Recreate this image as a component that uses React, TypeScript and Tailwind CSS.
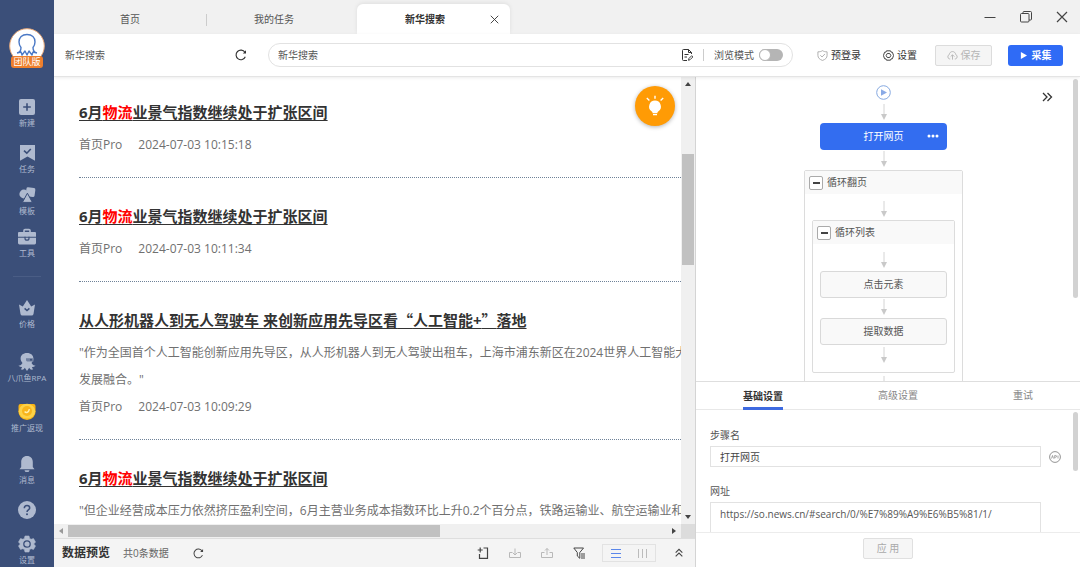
import React from "react";

type IconProps = { className?: string };

/* ---------- Sidebar icons ---------- */

const NewIcon = () => (
  <svg viewBox="0 0 18 18" className="size-[18px]">
    <rect x="1" y="1" width="16" height="16" rx="2" fill="currentColor" />
    <path d="M9 5.2v7.6M5.2 9h7.6" stroke="#3b4f79" strokeWidth="1.6" fill="none" />
  </svg>
);

const TaskIcon = () => (
  <svg viewBox="0 0 18 18" className="size-[18px]">
    <path d="M2 1h15v15.8L9.5 12.6 2 16.8z" fill="currentColor" />
    <path d="M6 6.6l2.8 2.6 4-4.2" stroke="#3b4f79" strokeWidth="1.6" fill="none" />
  </svg>
);

const TemplateIcon = () => (
  <svg viewBox="0 0 18 18" className="size-[18px]">
    <circle cx="5.8" cy="8" r="4.4" fill="currentColor" />
    <rect x="8" y="1.6" width="9" height="9" rx="1.6" transform="rotate(8 12 6)" fill="currentColor" />
    <path d="M9.4 7.2l5 9.2H4.4z" fill="currentColor" stroke="#3b4f79" strokeWidth="1" strokeLinejoin="round" />
  </svg>
);

const ToolIcon = () => (
  <svg viewBox="0 0 18 18" className="size-[18px]">
    <path d="M6 4.4V2.6a1 1 0 0 1 1-1h4a1 1 0 0 1 1 1v1.8" stroke="currentColor" strokeWidth="1.6" fill="none" />
    <path d="M1 4h16a1 1 0 0 1 1 1v3.8H0V5a1 1 0 0 1 1-1z" fill="currentColor" />
    <path d="M0 9.8h18V15a1.4 1.4 0 0 1-1.400 1.400H1.400A1.400 1.400 0 0 1 0 15z" fill="currentColor" />
    <path d="M7 8.800v1.400a2 2 0 0 0 4 0V8.800" stroke="#3b4f79" strokeWidth="1.200" fill="none" />
  </svg>
);

const PriceIcon = () => (
  <svg viewBox="0 0 18 18" className="size-[18px]">
    <path d="M1 5.500l3.800 2L9 1l4.200 6.500 3.800-2-1.500 9.500a2 2 0 0 1-2 1.600h-9a2 2 0 0 1-2-1.600z" fill="currentColor" />
    <path d="M6.600 9.400L9 11.600l2.400-2.200" stroke="#3b4f79" strokeWidth="1.500" fill="none" />
  </svg>
);

const RpaIcon = () => (
  <svg viewBox="0 0 18 18" className="size-[18px]">
    <path
      d="M9 0c4 0 6.400 2.400 6.400 5.600 0 2-.9 3.300-1.900 4.300.9 1.600 2 2.500 4 2.700-.8 1.200-2.400 1.600-3.600 1.100.2 1.200.6 2 1.300 2.600-1.600.8-3.200.2-4-1.500L9 17.900l-2.200-3.100c-.8 1.700-2.400 2.300-4 1.500.7-.6 1.100-1.400 1.300-2.600-1.200.5-2.800.1-3.600-1.100 2-.2 3.100-1.100 4-2.700-1-1-1.900-2.300-1.900-4.300C2.600 2.400 5 0 9 0z"
      fill="currentColor"
    />
    <path d="M8 5.200h7.600v3.200H10A1.600 1.600 0 0 1 8 6.800z" fill="#6f7f9f" />
    <circle cx="13" cy="6.800" r="1" fill="#3b4f79" />
  </svg>
);

const CoinIcon = () => (
  <svg viewBox="0 0 18 18" className="size-[18px]">
    <path d="M2.500 1h13a2 2 0 0 1 2 2v4A8.500 8.500 0 0 1 9 16.900 8.500 8.500 0 0 1 .5 7V3a2 2 0 0 1 2-2z" fill="#f9b414" />
    <ellipse cx="9" cy="8.200" rx="8.200" ry="7.400" fill="#fdd247" />
    <circle cx="9" cy="8" r="5" fill="#f8b51c" />
    <path d="M6.600 8.600c1.600 1.800 4 1 4.800-2.400" stroke="#fff0b0" strokeWidth="1.500" fill="none" />
  </svg>
);

const BellIcon = () => (
  <svg viewBox="0 0 18 18" className="size-[18px]">
    <path d="M9 1c3.600 0 5.800 2.600 5.800 6v5l1.700 2.200H1.500L3.200 12V7C3.200 3.600 5.400 1 9 1z" fill="currentColor" />
    <path d="M6.500 15.200h5a2.500 1.900 0 0 1-5 0z" fill="currentColor" />
  </svg>
);

const HelpIcon = () => (
  <svg viewBox="0 0 18 18" className="size-[18px]">
    <circle cx="9" cy="9" r="9" fill="currentColor" />
    <path d="M6.300 7.300C6.300 5.500 7.500 4.500 9 4.500s2.700 1 2.700 2.500c0 1.900-2.700 2-2.700 4" stroke="#3b4f79" strokeWidth="1.500" fill="none" />
    <circle cx="9" cy="13.200" r="1" fill="#3b4f79" />
  </svg>
);

const SettingIcon = () => (
  <svg viewBox="0 0 18 18" className="size-[18px]">
    <path
      d="M7 1h4l.6 2.400 1.500.9 2.400-.7 2 3.400L15.700 9l1.800 2-2 3.400-2.400-.7-1.500.9L11 17H7l-.6-2.400-1.500-.9-2.400.7-2-3.400L2.300 9 .5 7l2-3.400 2.400.7 1.500-.9z"
      fill="currentColor"
      stroke="currentColor"
      strokeLinejoin="round"
      strokeWidth=".6"
    />
    <circle cx="9" cy="9" r="3.200" fill="none" stroke="#3b4f79" strokeWidth="1.300" />
  </svg>
);

/* ---------- General icons ---------- */

const RefreshIcon = ({ className }: IconProps) => (
  <svg viewBox="0 0 12 12" className={className} fill="none" stroke="currentColor" strokeWidth="1.100">
    <path d="M10.300 7.800A4.800 4.800 0 1 1 9.900 3.300" />
    <path d="M11 1.200v3.200H7.800z" fill="currentColor" stroke="none" />
  </svg>
);

const CloseIcon = ({ className }: IconProps) => (
  <svg viewBox="0 0 12 12" className={className} fill="none" stroke="currentColor" strokeWidth="1.200">
    <path d="M1 1l10 10M11 1L1 11" />
  </svg>
);

const ChevronsRight = ({ className }: IconProps) => (
  <svg viewBox="0 0 12 12" className={className} fill="none" stroke="currentColor" strokeWidth="1.300">
    <path d="M2 2l4 4-4 4M6.500 2l4 4-4 4" />
  </svg>
);

const Arrow = () => (
  <svg viewBox="0 0 8 16" className="h-4 w-2">
    <path d="M4 0v11" stroke="#d4d4d4" />
    <path d="M1 10h6l-3 6z" fill="#c9c9c9" />
  </svg>
);

/* ---------- Sidebar ---------- */

const navItems = [
  { label: "新建", icon: <NewIcon />, space: "mt-[30px]" },
  { label: "任务", icon: <TaskIcon />, space: "mt-3.5" },
  { label: "模板", icon: <TemplateIcon />, space: "mt-2.5" },
  { label: "工具", icon: <ToolIcon />, space: "mt-2.5" },
];

const moreItems = [
  { label: "价格", icon: <PriceIcon />, space: "mt-[22px]" },
  { label: "八爪鱼RPA", icon: <RpaIcon />, space: "mt-[22px]" },
  { label: "推广返现", icon: <CoinIcon />, space: "mt-[18px]" },
  { label: "消息", icon: <BellIcon />, space: "mt-5" },
  { label: "", icon: <HelpIcon />, space: "mt-3.5" },
  { label: "设置", icon: <SettingIcon />, space: "mt-4" },
];

function NavItem({ label, icon, space }: { label: string; icon: React.ReactNode; space: string }) {
  return (
    <button aria-label={label || "帮助"} className={`flex shrink-0 flex-col items-center text-[#afbacf] ${space}`}>
      {icon}
      {label && <span className="text-[8px] leading-[14px] whitespace-nowrap">{label}</span>}
    </button>
  );
}

function Sidebar() {
  return (
    <nav className="flex w-[54px] shrink-0 flex-col items-center overflow-hidden bg-[#3b4f79] pt-7">
      <div className="flex shrink-0 flex-col items-center">
        <svg viewBox="0 0 36 36" className="size-9">
          <circle cx="18" cy="18" r="17.300" fill="#fff" stroke="#e9a877" strokeWidth="1" />
          <path
            d="M8 25c2.500-.5 4-3 4-5.500-1.500-2-2-4-2-5.500 0-4.500 3-7.500 8-7.500s8 3 8 7.500c0 1.500-.5 3.500-2 5.500 0 2.500 1.500 5 4 5.500M8 25l4-1 1 3 3-4 2 4 2-4 3 4 1-3 4 1"
            fill="none"
            stroke="#4b79c6"
            strokeWidth="1.400"
            strokeLinejoin="round"
          />
        </svg>
        <span className="z-10 -mt-2 rounded-[3px] bg-[#ee7f2d] px-0.5 text-[9px] leading-3 whitespace-nowrap text-white">
          团队版
        </span>
      </div>
      {navItems.map((item) => (
        <NavItem key={item.label} {...item} />
      ))}
      <hr className="mt-4 w-7 shrink-0 border-[#4a5d85]" />
      {moreItems.map((item) => (
        <NavItem key={item.label} {...item} />
      ))}
    </nav>
  );
}

/* ---------- Header ---------- */

function TabBar() {
  return (
    <header className="flex h-[34px] shrink-0 items-end bg-[#f1f1f1] text-[10px] text-[#555]">
      <button className="h-[29px] w-[152px] border-none">首页</button>
      <span className="mb-2 h-3 w-px bg-[#ccc]" />
      <button className="mr-4 h-[29px] w-[134px]">我的任务</button>
      <div className="flex h-[30px] w-[153px] items-center justify-between rounded-t-md bg-white pr-[11px] pl-12 shadow-[0_-1px_4px_rgba(0,0,0,0.08)]">
        <span className="font-bold text-[#333]">新华搜索</span>
        <button aria-label="关闭标签" className="text-[#333]">
          <CloseIcon className="size-[9px]" />
        </button>
      </div>
      <div className="mb-[11px] ml-auto flex items-center gap-6 pr-3 text-[#444]">
        <button aria-label="最小化">
          <svg viewBox="0 0 12 12" className="size-3" fill="none" stroke="currentColor">
            <path d="M.5 6.500h11" />
          </svg>
        </button>
        <button aria-label="还原">
          <svg viewBox="0 0 12 12" className="size-3" fill="none" stroke="currentColor">
            <rect x=".5" y="2.500" width="8.500" height="8.500" rx="1" />
            <path d="M3 2.500V1.500a1 1 0 0 1 1-1h6.500a1 1 0 0 1 1 1v6.500a1 1 0 0 1-1 1H9" />
          </svg>
        </button>
        <button aria-label="关闭">
          <CloseIcon className="size-3" />
        </button>
      </div>
    </header>
  );
}

function Toolbar() {
  return (
    <div className="z-10 flex h-[43px] shrink-0 items-center border-b border-[#e4e4e4] bg-white pr-[17px] pl-[11px] text-[10px] text-[#333] shadow-[0_1px_3px_rgba(0,0,0,0.08)]">
      <span className="w-[170px] text-[#555]">新华搜索</span>
      <button aria-label="刷新">
        <RefreshIcon className="size-3" />
      </button>
      <div className="mr-6 ml-[21px] flex h-6 flex-1 items-center rounded-full border border-[#e2e2e2] px-[9px]">
        <input aria-label="网址" defaultValue="新华搜索" className="min-w-0 flex-1 text-[#555] outline-none" />
        <button aria-label="编辑">
          <svg viewBox="0 0 12 12" className="size-3" fill="none" stroke="currentColor">
            <path d="M10.500 5V3.500L7.500.5h-5a1 1 0 0 0-1 1v9a1 1 0 0 0 1 1H6M7.500.5v3h3M3.500 5.500h4M3.500 8h2.500" />
            <path d="M7.500 11.300l.4-1.800 2.800-2.800 1.200 1.200-2.800 2.800z" strokeWidth=".9" />
          </svg>
        </button>
        <span className="mx-[10px] h-3 w-px bg-[#ccc]" />
        <label className="flex items-center gap-[5px] text-[#555]">
          浏览模式
          <input
            type="checkbox"
            role="switch"
            className="h-3 w-6 appearance-none rounded-full bg-[#b5b5b5] before:block before:size-3 before:rounded-full before:border before:border-[#b5b5b5] before:bg-white"
          />
        </label>
      </div>
      <button className="flex items-center gap-[3px]">
        <svg viewBox="0 0 12 12" className="size-[11px]" fill="none" stroke="#aaa">
          <path d="M6 .7c1.500 1 3 1.300 5 1.300v4c0 2.500-1.800 4.300-5 5.400C2.800 10.300 1 8.500 1 6V2c2 0 3.500-.3 5-1.300z" />
          <path d="M3.600 5.800l1.900 1.800 3.200-3.300" />
        </svg>
        预登录
      </button>
      <button className="ml-[22px] flex items-center gap-[3px]">
        <svg viewBox="0 0 12 12" className="size-[11px]" fill="none" stroke="#333">
          <path d="M3.800.9h4.400l.6 1.400 1.500.2L11.500 6l-1.200 3.500-1.500.2-.6 1.400H3.800l-.6-1.400-1.500-.2L.5 6l1.200-3.500 1.500-.2z" strokeLinejoin="round" />
          <path d="M4.700 3.800h2.600L8.600 6 7.300 8.200H4.700L3.400 6z" />
        </svg>
        设置
      </button>
      <button disabled className="ml-[18px] flex h-[21px] w-[57px] items-center justify-center gap-[3px] rounded-[2px] border border-[#dcdcdc] bg-[#f5f5f5] text-[#b5b5b5]">
        <svg viewBox="0 0 12 12" className="size-[11px]" fill="none" stroke="currentColor">
          <path d="M3.500 9.800H3A2.500 2.500 0 0 1 2.500 5C2.700 3 4.200 1.700 6 1.700S9.300 3 9.500 5a2.500 2.500 0 0 1-.5 4.800h-.5M6 10.500v-5M4 7.200l2-2 2 2" />
        </svg>
        保存
      </button>
      <button className="ml-4 flex h-[21px] w-[55px] items-center justify-center gap-[5px] rounded-[3px] bg-[#2f6bf6] font-bold text-white">
        <svg viewBox="0 0 8 8" className="size-[7px]">
          <path d="M1 0l7 4-7 4z" fill="currentColor" />
        </svg>
        采集
      </button>
    </div>
  );
}

/* ---------- Browser view ---------- */

type Article = { title: React.ReactNode; lines?: string[]; date?: string };

const logisticsTitle = (
  <>
    6月<em className="text-[#f00] not-italic">物流</em>业景气指数继续处于扩张区间
  </>
);

const cjk = "font-['Noto_Sans_CJK_SC',sans-serif]";

const articles: Article[] = [
  { title: logisticsTitle, date: "2024-07-03 10:15:18" },
  { title: logisticsTitle, date: "2024-07-03 10:11:34" },
  {
    title: (
      <>
        从人形机器人到无人驾驶车 来创新应用先导区看<span className={cjk}>“</span>人工智能+<span className={cjk}>”</span>落地
      </>
    ),
    lines: [
      "\"作为全国首个人工智能创新应用先导区，从人形机器人到无人驾驶出租车，上海市浦东新区在2024世界人工智能大会",
      "发展融合。\"",
    ],
    date: "2024-07-03 10:09:29",
  },
  {
    title: logisticsTitle,
    lines: [
      "\"但企业经营成本压力依然挤压盈利空间，6月主营业务成本指数环比上升0.2个百分点，铁路运输业、航空运输业和邮",
    ],
  },
];

function ArticleRow({ title, lines = [], date }: Article) {
  return (
    <article className="border-b border-dotted border-[#6f8298] pt-5 pb-[19px] text-xs leading-[27px] text-[#707070] first:pt-[17px]">
      <h2 className="mb-px text-[15px] leading-9 font-bold text-[#333]">
        <a href="#article" className="underline underline-offset-2">
          {title}
        </a>
      </h2>
      {lines.map((line) => (
        <p key={line}>{line}</p>
      ))}
      {date && (
        <p className="flex gap-4">
          <span>首页Pro</span>
          <time>{date}</time>
        </p>
      )}
    </article>
  );
}

function BrowserView() {
  return (
    <section className="flex min-h-0 flex-1 flex-col">
      <div className="flex min-h-0 flex-1">
        <div className="relative min-w-0 flex-1 overflow-hidden pl-[25px] whitespace-nowrap">
          {articles.map((article, i) => (
            <ArticleRow key={i} {...article} />
          ))}
          <button aria-label="提示" className="absolute top-[9px] right-[6px] flex size-10 items-center justify-center rounded-full bg-[#ff9b05] shadow-[0_1px_4px_rgba(0,0,0,0.3)]">
            <svg viewBox="0 0 20 22" className="h-[22px] w-5" fill="none" stroke="#fff" strokeWidth="1.400">
              <path d="M10 5.500a6 6 0 0 1 3.500 10.800c-.9.700-1.100 1.200-1.100 2H7.600c0-.8-.2-1.300-1.100-2A6 6 0 0 1 10 5.500z" fill="#fff" stroke="none" />
              <path d="M8 19.600h4M10 .8v2.900M1.800 3l2.600 2.400M18.200 3l-2.600 2.400" />
            </svg>
          </button>
        </div>
        <div className="flex w-[14px] shrink-0 flex-col items-center bg-[#f0f0f0] py-[5px]">
          <svg viewBox="0 0 6 4" className="h-1 w-1.5">
            <path d="M0 4l3-4 3 4z" fill="#444" />
          </svg>
          <span className="mt-[68px] h-[111px] w-3 bg-[#c1c1c1]" />
          <svg viewBox="0 0 6 4" className="mt-auto h-1 w-1.5">
            <path d="M0 0l3 4 3-4z" fill="#444" />
          </svg>
        </div>
      </div>
      <div className="flex h-[14px] shrink-0 items-center bg-[#f0f0f0]">
        <svg viewBox="0 0 4 6" className="mx-[5px] h-1.5 w-1">
          <path d="M4 0L0 3l4 3z" fill="#999" />
        </svg>
        <span className="h-3 w-[58%] bg-[#c1c1c1]" />
        <svg viewBox="0 0 4 6" className="mr-[5px] ml-auto h-1.5 w-1">
          <path d="M0 0l4 3-4 3z" fill="#444" />
        </svg>
        <span className="h-full w-[14px] bg-[#dcdcdc]" />
      </div>
    </section>
  );
}

function PreviewBar() {
  return (
    <footer className="flex h-[29px] shrink-0 items-center border-t border-[#dedede] bg-[#f4f4f4] pr-[11px] pl-2 text-[10px] text-[#444]">
      <strong className="text-xs text-[#333]">数据预览</strong>
      <span className="mr-6 ml-[13px] text-[#666]">共0条数据</span>
      <button aria-label="刷新数据">
        <RefreshIcon className="size-[11px]" />
      </button>
      <div className="mr-[17px] ml-auto flex items-center gap-5">
        <button aria-label="添加字段">
          <svg viewBox="0 0 12 12" className="size-3" fill="none" stroke="currentColor" strokeWidth="1.200">
            <path d="M2.500 7v4.300h8V1H6.500M3.200.5v5M.7 3h5" />
          </svg>
        </button>
        <button aria-label="导入" className="text-[#b8b8b8]">
          <svg viewBox="0 0 12 12" className="size-3" fill="none" stroke="currentColor">
            <path d="M3.500 5.500h-3v5h11v-5h-3M6 1.500v6.500M4 6l2 2 2-2" />
          </svg>
        </button>
        <button aria-label="导出" className="text-[#b8b8b8]">
          <svg viewBox="0 0 12 12" className="size-3" fill="none" stroke="currentColor">
            <path d="M3.500 5.500h-3v5h11v-5h-3M6 8V1.500M4 3.500l2-2 2 2" />
          </svg>
        </button>
        <button aria-label="筛选">
          <svg viewBox="0 0 12 12" className="size-3" fill="none" stroke="currentColor">
            <path d="M.8 1h9.700L6.800 5.500v5.800L4.300 9V5.500zM8 7h4M8 9h4M8 11h4" />
          </svg>
        </button>
      </div>
      <div className="flex h-[18px] w-[54px] items-center justify-around border border-[#e2e2e2]">
        <button aria-label="横向视图">
          <svg viewBox="0 0 10 10" className="size-2.5" stroke="#5b87ea">
            <path d="M0 1.500h10M0 5.500h10M0 9.500h10" />
          </svg>
        </button>
        <button aria-label="纵向视图">
          <svg viewBox="0 0 10 10" className="size-2.5" stroke="#bbbbbb">
            <path d="M1.500 1v9M5.500 1v9M9.500 1v9" />
          </svg>
        </button>
      </div>
      <button aria-label="展开" className="ml-[18px]">
        <ChevronsRight className="size-[10px] -rotate-90" />
      </button>
    </footer>
  );
}

/* ---------- Workflow ---------- */

function Connector({ className }: IconProps) {
  return (
    <div className={`flex shrink-0 flex-col items-center justify-end pb-[3px] ${className}`}>
      <Arrow />
    </div>
  );
}

function LoopHeader({ children }: { children: React.ReactNode }) {
  return (
    <div className="flex h-[23px] shrink-0 items-center gap-1 bg-[#f9f9f9] pl-1">
      <button aria-label="折叠" className="flex size-[14px] items-center justify-center rounded-[2px] border border-[#aaa] bg-white">
        <span className="h-[2px] w-[7px] bg-[#444]" />
      </button>
      {children}
    </div>
  );
}

function StepNode({ children }: { children: React.ReactNode }) {
  return (
    <button className="h-[27px] w-[127px] shrink-0 self-center rounded-[3px] border border-[#d9d9d9] bg-[#f9f9f9]">{children}</button>
  );
}

function Workflow() {
  return (
    <div className="flex min-h-0 flex-1 overflow-hidden text-[10px] text-[#555]">
      <div className="relative flex min-w-0 flex-1 flex-col items-center pt-2">
        <svg viewBox="0 0 15 15" className="size-[15px] shrink-0">
          <circle cx="7.500" cy="7.500" r="6.800" fill="#fff" stroke="#86a9e0" />
          <path d="M5 4.200l6 3.300-6 3.300z" fill="#8aaae6" />
        </svg>
        <Connector className="h-[23px]" />
        <button className="relative h-[27px] w-[127px] shrink-0 rounded-[4px] bg-[#336df0] text-white">
          打开网页
          <svg viewBox="0 0 12 4" className="absolute top-[11px] right-2 h-1 w-3" fill="currentColor">
            <circle cx="2" cy="2" r="1.500" />
            <circle cx="6" cy="2" r="1.500" />
            <circle cx="10" cy="2" r="1.500" />
          </svg>
        </button>
        <Connector className="h-5" />
        <div className="flex w-[159px] shrink-0 flex-col rounded-[2px] border border-[#dcdcdc]">
          <LoopHeader>循环翻页</LoopHeader>
          <Connector className="h-[26px]" />
          <div className="mx-[7px] flex flex-col rounded-[2px] border border-[#dcdcdc]">
            <LoopHeader>循环列表</LoopHeader>
            <Connector className="h-[27px]" />
            <StepNode>点击元素</StepNode>
            <Connector className="h-5" />
            <StepNode>提取数据</StepNode>
            <Connector className="mb-1.5 h-[21px]" />
          </div>
          <Connector className="h-[22px]" />
        </div>
        <button aria-label="收起面板" className="absolute top-[14px] right-[18px] text-[#333]">
          <ChevronsRight className="size-3" />
        </button>
      </div>
      <div className="w-[9px] shrink-0 pt-[2px] pl-[2px]">
        <div className="h-[219px] w-[5px] rounded-full bg-[#d2d2d2]" />
      </div>
    </div>
  );
}

function StepSettings() {
  return (
    <div className="flex h-[186px] shrink-0 flex-col border-t border-[#dedede] text-[10px] text-[#555]">
      <div role="tablist" className="flex h-7 shrink-0 justify-between border-b border-[#e8e8e8] px-[47px] text-[#888]">
        <button role="tab" className="h-7 border-b-3 border-[#3e6ae0] pt-[3px] font-bold text-[#333]">
          基础设置
        </button>
        <button role="tab">高级设置</button>
        <button role="tab">重试</button>
      </div>
      <div className="flex min-h-0 flex-1 overflow-hidden">
        <form className="min-w-0 flex-1 pt-[17px] pl-[14px]">
          <label htmlFor="step-name" className="block leading-4">
            步骤名
          </label>
          <div className="mt-[3px] flex items-center gap-2">
            <input id="step-name" defaultValue="打开网页" className="h-[21px] min-w-0 flex-1 border border-[#e2e2e2] px-[9px] text-[#444] outline-none" />
            <svg viewBox="0 0 12 12" className="mr-3 size-3" fill="none" stroke="#888">
              <circle cx="6" cy="6" r="5.400" strokeWidth=".9" />
              <path d="M2.500 7.500l1-3 1 3M5.700 7.500v-3h1a.8.8 0 0 1 0 1.700h-1M9 4.500v3" strokeWidth=".7" />
            </svg>
          </div>
          <label htmlFor="step-url" className="mt-4 block leading-4">
            网址
          </label>
          <div className="mt-[3px] pr-8">
            <textarea
              id="step-url"
              defaultValue="https://so.news.cn/#search/0/%E7%89%A9%E6%B5%81/1/"
              className="block h-[60px] w-full resize-none overflow-hidden border border-[#e2e2e2] px-[9px] py-[3px] leading-4 outline-none"
            />
          </div>
        </form>
        <div className="w-[7px] shrink-0 pt-[2px]">
          <div className="h-[59px] w-[5px] rounded-full bg-[#d2d2d2]" />
        </div>
      </div>
      <div className="flex h-[35px] shrink-0 justify-center border-t border-[#ececec] pt-[5px]">
        <button disabled className="h-[21px] w-[50px] rounded-[2px] border border-[#e0e0e0] bg-[#f6f6f6] text-[#aaa]">
          应 用
        </button>
      </div>
    </div>
  );
}

export default function App() {
  return (
    <div className="flex h-screen overflow-hidden bg-white font-['Open_Sans','Noto_Sans_CJK_SC',sans-serif]">
      <Sidebar />
      <div className="flex min-w-0 flex-1 flex-col">
        <TabBar />
        <Toolbar />
        <main className="flex min-h-0 flex-1">
          <div className="flex min-w-0 flex-1 flex-col border-r border-[#d4d4d4]">
            <BrowserView />
            <PreviewBar />
          </div>
          <aside className="flex w-96 shrink-0 flex-col">
            <Workflow />
            <StepSettings />
          </aside>
        </main>
      </div>
    </div>
  );
}
